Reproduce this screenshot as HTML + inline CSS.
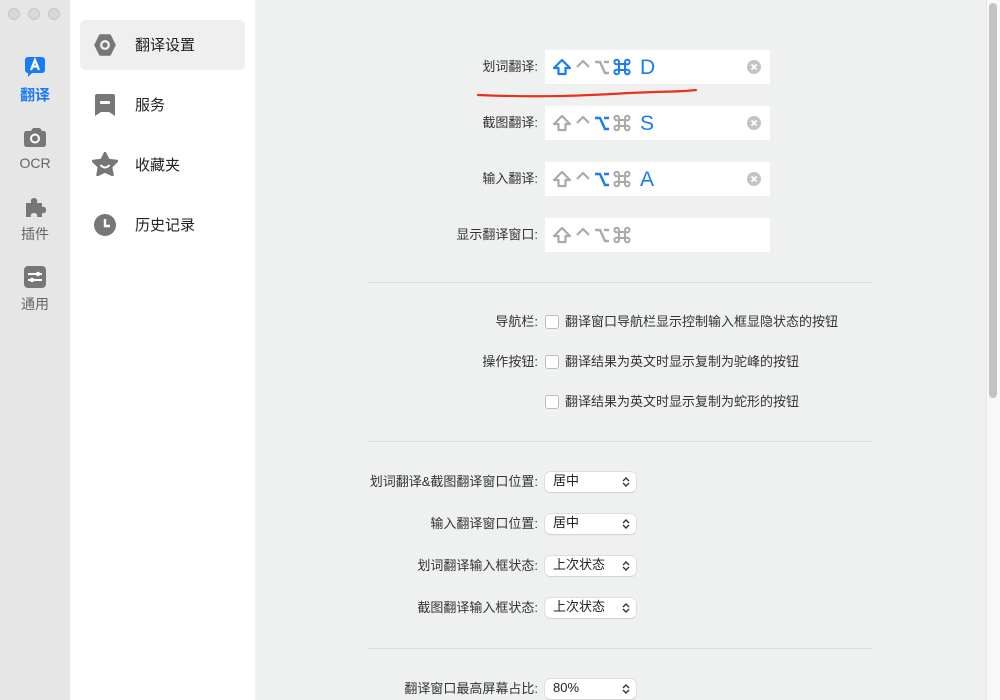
<!DOCTYPE html>
<html><head><meta charset="utf-8"><style>
*{margin:0;padding:0;box-sizing:border-box}
body{width:1000px;height:700px;overflow:hidden;font-family:"Liberation Sans","Noto Sans CJK SC",sans-serif;background:#eff0f0;position:relative;color:#333}
.abs{position:absolute}
#left{left:0;top:0;width:70px;height:700px;background:#e6e6e6}
#mid{left:70px;top:0;width:185px;height:700px;background:#fff}
.dot{width:12px;height:12px;border-radius:50%;background:#d8d8d8;border:1px solid #c8c8c8;top:8px}
.ln{width:70px;text-align:center;font-size:14px;color:#666}
.mi{left:135px;font-size:15px;color:#222}
.lab{right:462px;font-size:13px;color:#333;text-align:right;white-space:nowrap;line-height:16px}
.box{left:545px;width:225px;height:34px;background:#fff}
.l{position:absolute;top:6px;font-family:"Liberation Sans",sans-serif;font-size:21px;color:#1a7cf5;line-height:24px}
.clr{position:absolute;left:202px;top:10px}
.hr{left:368px;width:505px;height:1px;background:#dcdcdc}
.cb{left:545px;width:14px;height:14px;border:1px solid #bbb;border-radius:3px;background:#fff}
.ct{left:565px;font-size:13px;color:#333;line-height:16px}
.sel{left:545px;width:91px;height:20px;background:#fff;border-radius:5px;box-shadow:0 0 0 0.5px #ccc,0 1px 1px rgba(0,0,0,.12);font-size:13px;line-height:18px;padding-left:8px;color:#222}
.arr{position:absolute;right:6px;top:4px}
</style></head><body>
<div id="left" class="abs"></div>
<div id="mid" class="abs"></div>
<div class="abs dot" style="left:8px"></div><div class="abs dot" style="left:28px"></div><div class="abs dot" style="left:48px"></div>

<svg class="abs" style="left:24px;top:56px" width="22" height="22" viewBox="0 0 22 22"><rect x="1" y="1" width="20" height="16" rx="3" fill="#1a7cf5"/><path d="M4 16 L4 21 L9 16Z" fill="#1a7cf5"/><path d="M7 14 L11 4 L15 14 M8.5 10.5 H13.5" stroke="#fff" stroke-width="2.2" fill="none"/></svg>
<div class="abs ln" style="top:84px;color:#1a7cf5;font-weight:bold;font-size:15px">翻译</div>
<svg class="abs" style="left:23px;top:126px" width="24" height="22" viewBox="0 0 24 22"><path d="M3 5 H8 L10 2 H17 L19 5 H21 Q23 5 23 8 V18 Q23 21 20 21 H4 Q1 21 1 18 V8 Q1 5 3 5Z" fill="#777"/><circle cx="12" cy="12.5" r="5" fill="#fff"/><circle cx="12" cy="12.5" r="3" fill="#777"/></svg>
<div class="abs ln" style="top:155px">OCR</div>
<svg class="abs" style="left:24px;top:196px" width="22" height="22" viewBox="0 0 22 22"><path d="M2 7 H7 Q6 2 10 2 Q14 2 13 7 H18 V11 Q22 10 22 14 Q22 18 18 17 V21 H13 Q14 17 10 17 Q6 17 7 21 H2Z" fill="#777"/></svg>
<div class="abs ln" style="top:224px">插件</div>
<svg class="abs" style="left:24px;top:266px" width="22" height="22" viewBox="0 0 22 22"><rect x="0" y="0" width="22" height="22" rx="4" fill="#777"/><path d="M4 8 H18 M4 14 H18" stroke="#fff" stroke-width="2"/><circle cx="14" cy="8" r="2.2" fill="#fff"/><circle cx="8" cy="14" r="2.2" fill="#fff"/></svg>
<div class="abs ln" style="top:294px">通用</div>

<div class="abs" style="left:80px;top:20px;width:165px;height:50px;background:#efefef;border-radius:5px"></div>
<svg class="abs" style="left:93px;top:33px" width="24" height="24" viewBox="0 0 24 24"><path d="M7 2 H17 L22 12 L17 22 H7 L2 12Z" fill="#777" stroke="#777" stroke-width="1.5" stroke-linejoin="round"/><circle cx="12" cy="12" r="5" fill="#efefef"/><circle cx="12" cy="12" r="2.6" fill="#777"/></svg>
<div class="abs mi" style="top:34px">翻译设置</div>
<svg class="abs" style="left:94px;top:93px" width="22" height="24" viewBox="0 0 22 24"><path d="M3 1 H19 Q21 1 21 3 V23 L15 19 H7 L1 23 V3 Q1 1 3 1Z" fill="#777"/><rect x="6" y="8" width="10" height="3" rx="1" fill="#fff"/></svg>
<div class="abs mi" style="top:94px">服务</div>
<svg class="abs" style="left:92px;top:152px" width="26" height="24" viewBox="0 0 26 24"><path d="M13 1 L16.5 8 L25 9 L19 15 L20.5 23 L13 19.5 L5.5 23 L7 15 L1 9 L9.5 8Z" fill="#777" stroke="#777" stroke-linejoin="round" stroke-width="2.5"/><path d="M8.5 13 Q13 18 17.5 13" stroke="#fff" stroke-width="2" fill="none"/></svg>
<div class="abs mi" style="top:154px">收藏夹</div>
<svg class="abs" style="left:93px;top:213px" width="24" height="24" viewBox="0 0 24 24"><circle cx="12" cy="12" r="11" fill="#777"/><path d="M12 6 V13 H17" stroke="#fff" stroke-width="2.4" fill="none"/></svg>
<div class="abs mi" style="top:214px">历史记录</div>

<div class="abs" style="left:986px;top:0;width:14px;height:700px;background:#f8f8f8;border-left:1px solid #e6e6e6"></div>
<div class="abs" style="left:989px;top:3px;width:8px;height:395px;background:#c3c3c3;border-radius:4px"></div>

<svg width="0" height="0" style="position:absolute"><defs>
<g id="x"><circle cx="7" cy="7" r="7" fill="#c4c4c4"/><path d="M4.5 4.5 L9.5 9.5 M9.5 4.5 L4.5 9.5" stroke="#fff" stroke-width="1.8"/></g>
<g id="sh"><path d="M9 2 L17 10 H12.5 V16 H5.5 V10 H1 Z" fill="none" stroke-width="2.2" stroke-linejoin="round"/></g>
<g id="ct"><path d="M2 9 L8 3 L14 9" fill="none" stroke-width="2.2"/></g>
<g id="op"><path d="M1 4 H6 L11 15 H15 M10 4 H15" fill="none" stroke-width="2.4"/></g>
<g id="cm"><path d="M6 6 H12 V12 H6 Z M6 6 V4 A2.3 2.3 0 1 0 3.7 6.3 H6 M12 6 V4 A2.3 2.3 0 1 1 14.3 6.3 H12 M12 12 V14 A2.3 2.3 0 1 0 14.3 11.7 H12 M6 12 V14 A2.3 2.3 0 1 1 3.7 11.7 H6" fill="none" stroke-width="2"/></g>
</defs></svg>

<div class="abs lab" style="top:59px">划词翻译:</div>
<div class="abs box" style="top:50px"><svg class="abs" style="left:8px;top:8px" width="95" height="20"><use href="#sh" stroke="#1a7cf5"/><g transform="translate(22,0)"><use href="#ct" stroke="#aaa"/></g><g transform="translate(41,0)"><use href="#op" stroke="#aaa"/></g><g transform="translate(60,0)"><use href="#cm" stroke="#1a7cf5"/></g></svg><span class="l" style="left:95px">D</span><svg class="clr" width="14" height="14"><use href="#x"/></svg></div>
<div class="abs lab" style="top:115px">截图翻译:</div>
<div class="abs box" style="top:106px"><svg class="abs" style="left:8px;top:8px" width="95" height="20"><use href="#sh" stroke="#aaa"/><g transform="translate(22,0)"><use href="#ct" stroke="#aaa"/></g><g transform="translate(41,0)"><use href="#op" stroke="#1a7cf5"/></g><g transform="translate(60,0)"><use href="#cm" stroke="#aaa"/></g></svg><span class="l" style="left:95px">S</span><svg class="clr" width="14" height="14"><use href="#x"/></svg></div>
<div class="abs lab" style="top:171px">输入翻译:</div>
<div class="abs box" style="top:162px"><svg class="abs" style="left:8px;top:8px" width="95" height="20"><use href="#sh" stroke="#aaa"/><g transform="translate(22,0)"><use href="#ct" stroke="#aaa"/></g><g transform="translate(41,0)"><use href="#op" stroke="#1a7cf5"/></g><g transform="translate(60,0)"><use href="#cm" stroke="#aaa"/></g></svg><span class="l" style="left:95px">A</span><svg class="clr" width="14" height="14"><use href="#x"/></svg></div>
<div class="abs lab" style="top:227px">显示翻译窗口:</div>
<div class="abs box" style="top:218px"><svg class="abs" style="left:8px;top:8px" width="95" height="20"><use href="#sh" stroke="#aaa"/><g transform="translate(22,0)"><use href="#ct" stroke="#aaa"/></g><g transform="translate(41,0)"><use href="#op" stroke="#aaa"/></g><g transform="translate(60,0)"><use href="#cm" stroke="#aaa"/></g></svg></div>
<svg class="abs" style="left:470px;top:85px" width="240" height="15"><path d="M8 10 C80 13 120 10 160 8 S210 7 226 5" stroke="#e8321e" stroke-width="2.2" fill="none" stroke-linecap="round"/></svg>

<div class="abs hr" style="top:282px"></div>
<div class="abs lab" style="top:314px">导航栏:</div>
<div class="abs cb" style="top:315px"></div><div class="abs ct" style="top:314px">翻译窗口导航栏显示控制输入框显隐状态的按钮</div>
<div class="abs lab" style="top:354px">操作按钮:</div>
<div class="abs cb" style="top:355px"></div><div class="abs ct" style="top:354px">翻译结果为英文时显示复制为驼峰的按钮</div>
<div class="abs cb" style="top:395px"></div><div class="abs ct" style="top:394px">翻译结果为英文时显示复制为蛇形的按钮</div>
<div class="abs hr" style="top:441px"></div>

<div class="abs lab" style="top:474px">划词翻译&amp;截图翻译窗口位置:</div>
<div class="abs sel" style="top:472px">居中<svg class="arr" width="8" height="12"><path d="M1 5 L4 2 L7 5 M1 7 L4 10 L7 7" stroke="#333" stroke-width="1.4" fill="none"/></svg></div>
<div class="abs lab" style="top:516px">输入翻译窗口位置:</div>
<div class="abs sel" style="top:514px">居中<svg class="arr" width="8" height="12"><path d="M1 5 L4 2 L7 5 M1 7 L4 10 L7 7" stroke="#333" stroke-width="1.4" fill="none"/></svg></div>
<div class="abs lab" style="top:558px">划词翻译输入框状态:</div>
<div class="abs sel" style="top:556px">上次状态<svg class="arr" width="8" height="12"><path d="M1 5 L4 2 L7 5 M1 7 L4 10 L7 7" stroke="#333" stroke-width="1.4" fill="none"/></svg></div>
<div class="abs lab" style="top:600px">截图翻译输入框状态:</div>
<div class="abs sel" style="top:598px">上次状态<svg class="arr" width="8" height="12"><path d="M1 5 L4 2 L7 5 M1 7 L4 10 L7 7" stroke="#333" stroke-width="1.4" fill="none"/></svg></div>
<div class="abs hr" style="top:648px"></div>
<div class="abs lab" style="top:681px">翻译窗口最高屏幕占比:</div>
<div class="abs sel" style="top:679px">80%<svg class="arr" width="8" height="12"><path d="M1 5 L4 2 L7 5 M1 7 L4 10 L7 7" stroke="#333" stroke-width="1.4" fill="none"/></svg></div>
</body></html>
